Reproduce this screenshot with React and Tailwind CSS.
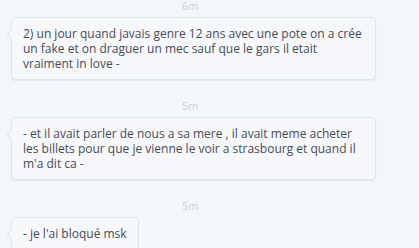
export default function App() {
  const msgs = [
    {
      t: "6m",
      text: "2) un jour quand javais genre 12 ans avec une pote on a crée un fake et on draguer un mec sauf que le gars il etait vraiment in love -",
      full: true,
    },
    {
      t: "5m",
      text: "- et il avait parler de nous a sa mere , il avait meme acheter les billets pour que je vienne le voir a strasbourg et quand il m'a dit ca -",
      full: true,
    },
    { t: "5m", text: "- je l'ai bloqué msk", full: false },
  ];
  return (
    <div className="w-[419px] h-[248px] overflow-hidden bg-[#f4f7fa] font-['Open_Sans',sans-serif]">
      <div className="flex flex-col gap-[20px]">
        {msgs.map((m, i) => (
          <div key={i} className="flex flex-col gap-[5px]">
            <div className="pl-[182px] text-[11px] leading-[12px] text-[#c9d0d8]">{m.t}</div>
            <div className="pl-[11px]">
              <div
                className={`relative rounded-[4px] border border-[#e0e5ea] bg-[#f6f8fb] shadow-[0_1px_1px_rgba(0,0,0,0.06)] px-[11px] py-[8px] text-[12px] leading-[15px] text-[#474b56] ${m.full ? "w-[365px]" : "w-fit"}`}
              >
                <span className="absolute left-[-4px] top-[13px] w-[7px] h-[7px] rotate-45 bg-[#f6f8fb] border-l border-b border-[#e0e5ea]" />
                {m.text}
              </div>
            </div>
          </div>
        ))}
      </div>
    </div>
  );
}
